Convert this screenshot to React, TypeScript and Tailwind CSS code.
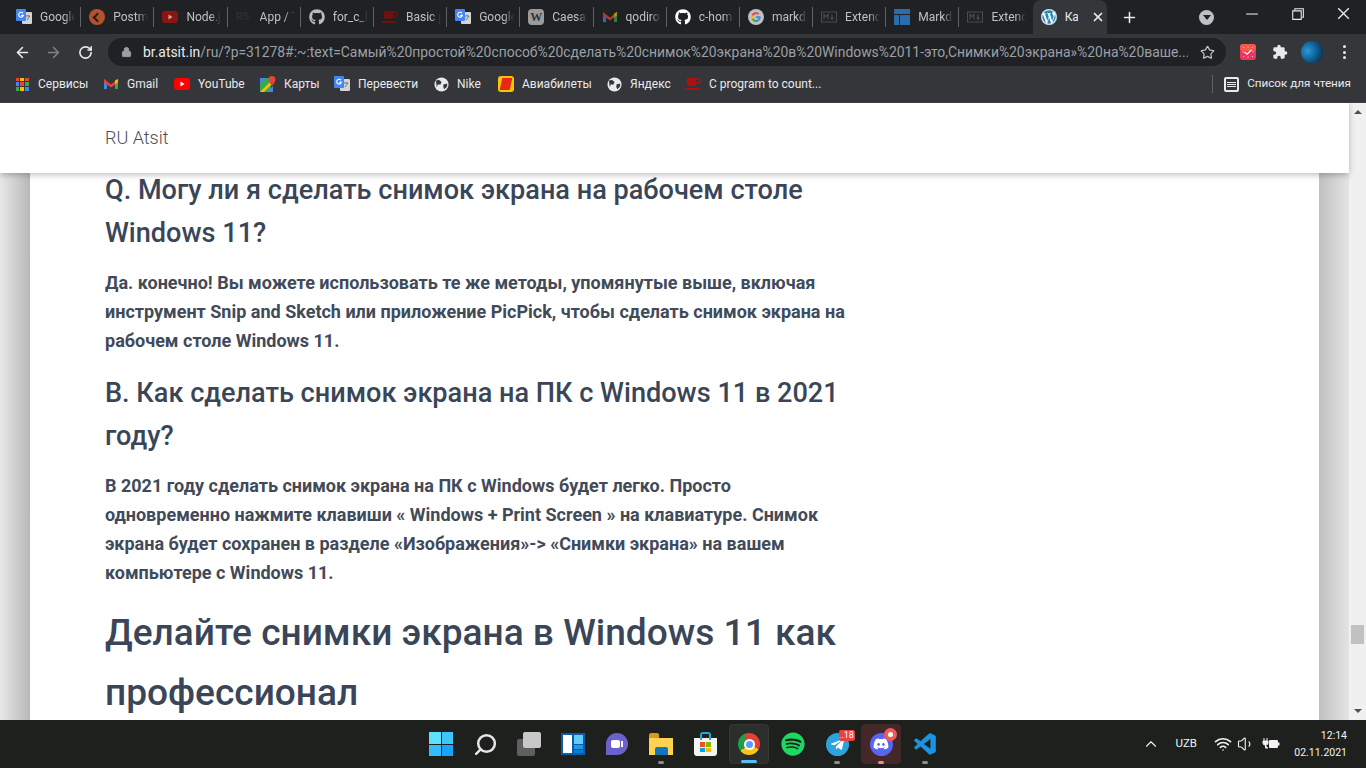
import type { ReactNode } from 'react'
import { FaGithub, FaSpotify, FaDiscord, FaTelegramPlane, FaWordpress } from 'react-icons/fa'
import { BiLogoVisualStudio } from 'react-icons/bi'
import { VscChromeMinimize, VscChromeRestore, VscChromeClose } from 'react-icons/vsc'
import { ArrowLeft, ArrowRight, RotateCw, Lock, Star, Search, Wifi, Volume1, ChevronUp, Plus, X } from 'lucide-react'

const URL_REST =
  '/ru/?p=31278#:~:text=Самый%20простой%20способ%20сделать%20снимок%20экрана%20в%20Windows%2011-это,Снимки%20экрана»%20на%20ваше...'

function Translate() {
  return (
    <svg viewBox="0 0 16 16" className="w-4 h-4">
      <rect x="6" y="3" width="10" height="12" rx="1" fill="#d4d4d4" />
      <path d="M10 7h4M12 6v1M11 11l3-4" stroke="#777" strokeWidth="1" fill="none" />
      <rect x="0" y="0" width="10" height="12" rx="1" fill="#4285f4" />
      <path d="M7 4.200a2.400 2.400 0 1 0 .4 2.200H5.200" stroke="#fff" strokeWidth="1.100" fill="none" />
    </svg>
  )
}

function GmailIcon({ dim = false }: { dim?: boolean }) {
  return (
    <svg viewBox="0 0 16 16" className={dim ? 'w-4 h-4 opacity-70' : 'w-4 h-4'}>
      <path d="M1 3v10h3V7z" fill="#4285f4" />
      <path d="M15 3v10h-3V7z" fill="#34a853" />
      <path d="M1 3l7 5.400L15 3v3.400L8 11.600 1 6.400z" fill="#ea4335" />
      <path d="M12 4.600L15 3v3.400l-3 2.200z" fill="#fbbc04" />
    </svg>
  )
}

function GoogleG() {
  return (
    <svg viewBox="0 0 16 16" className="w-4 h-4">
      <circle cx="8" cy="8" r="8" fill="#dadce0" fillOpacity="0.85" />
      <path d="M12.600 8.200c0-.4 0-.7-.1-1H8v1.900h2.600a2.300 2.300 0 0 1-1 1.500l1.500 1.200c.9-.9 1.500-2.100 1.500-3.600z" fill="#4285f4" />
      <path d="M8 13c1.300 0 2.300-.4 3.100-1.200L9.600 10.600c-.4.300-1 .5-1.600.5-1.300 0-2.300-.8-2.700-2L3.700 10.300C4.500 11.900 6.100 13 8 13z" fill="#34a853" />
      <path d="M5.300 9.100a3 3 0 0 1 0-2L3.700 5.800a5 5 0 0 0 0 4.500z" fill="#fbbc04" />
      <path d="M8 5c.7 0 1.300.2 1.800.7L11.200 4.300A4.900 4.900 0 0 0 3.700 5.800l1.600 1.300C5.700 5.800 6.700 5 8 5z" fill="#ea4335" />
    </svg>
  )
}

function Cup({ color }: { color: string }) {
  return (
    <svg viewBox="0 0 16 16" className="w-4 h-4">
      <path d="M2 2h9v6a2 2 0 0 1-2 2H4a2 2 0 0 1-2-2z" fill={color} />
      <path d="M11 3h2a1.500 1.500 0 0 1 0 4h-2" stroke={color} strokeWidth="1.300" fill="none" />
      <rect x="0" y="12" width="14" height="2" fill={color} />
    </svg>
  )
}

function Markdown() {
  return (
    <svg viewBox="0 0 16 16" className="w-4 h-4">
      <rect x="0.500" y="3" width="15" height="10" fill="none" stroke="#4a4b4f" />
      <path d="M3 10.500V5.500l2 2.200 2-2.200v5M11 5.500v4M9.500 8.500l1.500 2 1.500-2" stroke="#4a4b4f" strokeWidth="1.200" fill="none" />
    </svg>
  )
}

function Globe() {
  return (
    <svg viewBox="0 0 16 16" className="w-[15px] h-[15px]">
      <circle cx="8" cy="8" r="7.500" fill="#e8eaed" />
      <path d="M2 4l3-1 3 2-1 3-3 0-1 3zM10 8l4-1 0 3-3 3-1-2z" fill="#35363a" />
    </svg>
  )
}

function Tube({ bg, play }: { bg: string; play: string }) {
  return (
    <svg viewBox="0 0 16 12" className="w-4 h-3">
      <rect width="16" height="12" rx="3" fill={bg} />
      <path d="M6.500 3.500v5l4-2.500z" fill={play} />
    </svg>
  )
}

const tabs: { title: string; icon: ReactNode }[] = [
  { title: 'Google', icon: <Translate /> },
  {
    title: 'Postman',
    icon: (
      <span className="w-4 h-4 rounded-full bg-[#b3522c] flex items-center justify-center">
        <span className="w-[7px] h-[7px] rotate-45 border-l-2 border-b-2 border-[#2b1c16]" />
      </span>
    ),
  },
  { title: 'Node.js', icon: <Tube bg="#8a1515" play="#d8a0a0" /> },
  { title: 'App / Tab', icon: <span className="w-4 text-[11px] leading-4 font-bold text-[#2c2d31]">RS</span> },
  { title: 'for_c_lang', icon: <FaGithub className="w-4 h-4 text-[#b9babd]" /> },
  { title: 'Basic p', icon: <Cup color="#6e1010" /> },
  { title: 'Google', icon: <Translate /> },
  {
    title: 'Caesar',
    icon: <span className="w-4 h-4 rounded-sm bg-[#9b9b9b] text-center text-[12px] leading-4 font-bold text-[#333] [font-family:'Liberation_Serif',serif]">W</span>,
  },
  { title: 'qodirov', icon: <GmailIcon dim /> },
  { title: 'c-home', icon: <FaGithub className="w-4 h-4 text-white" /> },
  { title: 'markdown', icon: <GoogleG /> },
  { title: 'Extended', icon: <Markdown /> },
  {
    title: 'Markdown',
    icon: (
      <span className="w-4 h-4 flex flex-col gap-px">
        <span className="h-[5px] bg-[#2a6cac]" />
        <span className="flex-1 flex gap-px">
          <span className="w-[5px] bg-[#2a6cac]" />
          <span className="flex-1 bg-[#2a6cac]" />
        </span>
      </span>
    ),
  },
  { title: 'Extended', icon: <Markdown /> },
]

const bookmarks: { label: string; icon: ReactNode; width: string }[] = [
  {
    label: 'Сервисы',
    width: 'w-[89px]',
    icon: (
      <span className="w-[13px] h-[13px] grid grid-cols-3 gap-px">
        {['#ea4335', '#fbbc04', '#ea4335', '#4285f4', '#ea4335', '#34a853', '#34a853', '#fbbc04', '#4285f4'].map((c, i) => (
          <span key={i} style={{ backgroundColor: c }} />
        ))}
      </span>
    ),
  },
  { label: 'Gmail', width: 'w-[71px]', icon: <GmailIcon /> },
  { label: 'YouTube', width: 'w-[86px]', icon: <Tube bg="#ff0000" play="#ffffff" /> },
  {
    label: 'Карты',
    width: 'w-[74px]',
    icon: (
      <svg viewBox="0 0 16 16" className="w-4 h-4">
        <path d="M0 2h11v14H0z" fill="#34a853" />
        <path d="M0 16L11 5v4l-7 7z" fill="#fbbc04" />
        <path d="M7 16l6-6v6z" fill="#4285f4" />
        <path d="M0 2h5L0 8z" fill="#4285f4" />
        <path d="M12 0a3.500 3.500 0 0 1 3.500 3.500C15.500 6 12 10 12 10S8.500 6 8.500 3.500A3.500 3.500 0 0 1 12 0z" fill="#ea4335" />
      </svg>
    ),
  },
  { label: 'Перевести', width: 'w-[99px]', icon: <Translate /> },
  { label: 'Nike', width: 'w-[65px]', icon: <Globe /> },
  {
    label: 'Авиабилеты',
    width: 'w-[108px]',
    icon: (
      <span className="w-4 h-4 rounded-[3px] bg-[#f7c600] flex items-center justify-center">
        <span className="w-[10px] h-3 bg-[#e8261c] -skew-x-12" />
      </span>
    ),
  },
  { label: 'Яндекс', width: 'w-[79px]', icon: <Globe /> },
  { label: 'C program to count...', width: 'w-[140px]', icon: <Cup color="#b01010" /> },
]

const launch: { icon: ReactNode; tile?: string; dot?: string }[] = [
  {
    icon: (
      <span className="w-6 h-6 grid grid-cols-2 gap-px">
        <span className="bg-[#5ee0fb]" />
        <span className="bg-[#3cc6fb]" />
        <span className="bg-[#34bcfb]" />
        <span className="bg-[#18a4fa]" />
      </span>
    ),
  },
  { icon: <Search className="w-[25px] h-[25px] text-[#e6e6e6] -scale-x-100" strokeWidth={2.400} /> },
  {
    icon: (
      <span className="relative w-6 h-6">
        <span className="absolute left-0 bottom-0 w-[18px] h-[17px] rounded-[2px] bg-[#5f5f5f]" />
        <span className="absolute right-0 top-0 w-[18px] h-[16px] rounded-[2px] bg-[#c8c8c8]" />
      </span>
    ),
  },
  {
    icon: (
      <span className="w-6 h-[22px] bg-[#0c5da8] p-[2px] flex gap-[2px]">
        <span className="w-[9px] bg-white" />
        <span className="flex-1 flex flex-col gap-px">
          <span className="flex-1 bg-[#62cdf8]" />
          <span className="h-[4px] bg-[#1e9be8]" />
          <span className="h-[3px] bg-[#0f7cd4]" />
        </span>
      </span>
    ),
  },
  {
    icon: (
      <span className="w-[22px] h-[22px] rounded-full rounded-bl-[3px] bg-[#6b62c9] flex items-center justify-center gap-px">
        <span className="w-[9px] h-2 rounded-[2px] bg-white" />
        <span className="w-[2px] h-[6px] bg-white" />
      </span>
    ),
  },
  {
    icon: (
      <span className="w-6 h-[22px] flex flex-col">
        <span className="h-[5px] w-[10px] rounded-t-[2px] bg-[#d99a1c]" />
        <span className="flex-1 bg-[#ffd34f] flex items-end justify-center">
          <span className="w-[13px] h-2 rounded-t-[2px] bg-[#1076c0]" />
        </span>
      </span>
    ),
    dot: 'bg-[#8b8d8b]',
  },
  {
    icon: (
      <span className="relative w-[23px] h-[24px] flex items-end">
        <span className="absolute left-[6px] top-0 w-[11px] h-2 rounded-t-[3px] border-2 border-b-0 border-[#23a9e1]" />
        <span className="w-full h-[18px] rounded-b-[3px] bg-[#f3f3f3] grid grid-cols-2 gap-px px-[6px] py-[4px]">
          <span className="bg-[#f25022]" />
          <span className="bg-[#7fba00]" />
          <span className="bg-[#00a4ef]" />
          <span className="bg-[#ffb900]" />
        </span>
      </span>
    ),
  },
  {
    icon: (
      <span className="w-[22px] h-[22px] rounded-full bg-[conic-gradient(#e34133_0deg_120deg,#f9c513_120deg_230deg,#1f9e4a_230deg_335deg,#e34133_335deg)] flex items-center justify-center">
        <span className="w-[7px] h-[7px] rounded-full bg-[#5a9df5] border-2 border-white box-content" />
      </span>
    ),
    tile: 'bg-[#2c2e2b] border border-[#363835]',
    dot: 'bg-[#58bdf0] !w-4',
  },
  {
    icon: <FaSpotify className="w-6 h-6 text-[#1ed760]" />,
  },
  {
    icon: (
      <span className="relative w-[23px] h-[23px] rounded-full bg-[#2ba3dc] flex items-center justify-center">
        <FaTelegramPlane className="w-[15px] h-[15px] text-white" />
        <span className="absolute -top-[3px] -right-[6px] w-[16px] h-[11px] rounded-[2px] bg-[#e8433f] text-white text-[9px] leading-[11px] text-center whitespace-nowrap">..18</span>
      </span>
    ),
    dot: 'bg-[#8b8d8b]',
  },
  {
    icon: (
      <span className="relative w-[23px] h-[23px] rounded-full bg-[#5865f2] flex items-center justify-center">
        <FaDiscord className="w-4 h-4 text-white" />
        <span className="absolute -top-[5px] -right-[4px] w-[13px] h-[13px] rounded-full bg-[#ef5b5b] flex items-center justify-center">
          <span className="w-[5px] h-[5px] rounded-full bg-white" />
        </span>
      </span>
    ),
    tile: 'bg-[#432729]',
    dot: 'bg-[#f08a8a]',
  },
  { icon: <BiLogoVisualStudio className="w-[26px] h-[26px] text-[#1a94e0]" />, dot: 'bg-[#8b8d8b]' },
]

function Tab({ title, icon, last }: { title: string; icon: ReactNode; last: boolean }) {
  return (
    <div className="w-[73.200px] h-full flex items-center pl-2 shrink-0">
      <span className="w-4 h-4 shrink-0 flex items-center justify-center">{icon}</span>
      <span className="ml-2 w-[35px] overflow-hidden whitespace-nowrap text-[12px] text-[#bdc1c6] [mask-image:linear-gradient(to_right,black_70%,transparent)]">
        {title}
      </span>
      {!last && <span className="ml-auto w-px h-5 bg-[#5f6368]" />}
    </div>
  )
}

function Bookmark({ label, icon, width }: { label: string; icon: ReactNode; width: string }) {
  return (
    <div className={`${width} shrink-0 flex items-center gap-2`}>
      <span className="w-4 flex justify-center">{icon}</span>
      <span className="text-[12px] text-[#e8eaed] whitespace-nowrap">{label}</span>
    </div>
  )
}

export default function App() {
  return (
    <div className="h-screen w-full flex flex-col overflow-hidden bg-white font-['Roboto',sans-serif]">
      {/* tab strip */}
      <div className="h-[34px] shrink-0 bg-[#202124] flex items-center">
        <div className="h-full flex items-center pl-2">
          {tabs.map((t, i) => (
            <Tab key={i} title={t.title} icon={t.icon} last={i === tabs.length - 1} />
          ))}
          <div className="w-[74px] h-full rounded-t-lg bg-[#35363a] flex items-center pl-2 shrink-0">
            <FaWordpress className="w-4 h-4 text-[#2a87b8] bg-white rounded-full" />
            <span className="ml-2 text-[12px] text-[#e8eaed] w-[13px] overflow-hidden">Как</span>
            <X className="ml-[13px] w-[14px] h-[14px] text-[#e8eaed]" strokeWidth={3} />
          </div>
          <Plus className="ml-[14px] w-[17px] h-[17px] text-[#e8eaed]" strokeWidth={2.200} />
        </div>
        <div className="ml-auto flex items-center h-full">
          <span className="w-[15px] h-[15px] mr-[14px] rounded-full bg-[#bdc1c6] flex items-center justify-center">
            <span className="w-0 h-0 mt-px border-x-[4px] border-t-[5px] border-x-transparent border-t-[#202124]" />
          </span>
          <div className="flex pb-[7px] text-[#e8eaed]">
            <span className="w-[46px] flex justify-center"><VscChromeMinimize className="w-[17px] h-[17px]" /></span>
            <span className="w-[46px] flex justify-center"><VscChromeRestore className="w-[17px] h-[17px]" /></span>
            <span className="w-[46px] flex justify-center"><VscChromeClose className="w-[17px] h-[17px]" /></span>
          </div>
        </div>
      </div>

      {/* toolbar */}
      <div className="h-[36px] shrink-0 bg-[#35363a] flex items-center pl-[14px] pr-[20px]">
        <ArrowLeft className="w-[17px] h-[17px] text-[#e8eaed]" strokeWidth={2.200} />
        <ArrowRight className="ml-[14px] w-[17px] h-[17px] text-[#7f8286]" strokeWidth={2.200} />
        <RotateCw className="ml-[16px] w-[15px] h-[15px] text-[#e8eaed]" strokeWidth={2.600} />
        <div className="ml-[15px] flex-1 min-w-0 h-[28px] rounded-full bg-[#202124] flex items-center pl-[13px] pr-[11px]">
          <Lock className="w-[11px] h-[12px] text-[#9aa0a6] shrink-0" fill="#9aa0a6" />
          <div className="ml-[11px] flex-1 min-w-0 overflow-hidden whitespace-nowrap text-[13.900px] text-[#9aa0a6]">
            <span className="text-[#e8eaed]">br.atsit.in</span>
            {URL_REST}
          </div>
          <Star className="ml-[12px] w-[15px] h-[15px] text-[#bdc1c6] shrink-0" strokeWidth={2} />
        </div>
        <svg viewBox="0 0 16 16" className="ml-[14px] w-[16px] h-[16px] shrink-0">
          <rect width="16" height="16" rx="3" fill="#f0345f" />
          <rect width="16" height="7" rx="3" fill="#f4584a" />
          <path d="M4.500 8l2.500 2.300L11.500 6" stroke="#fff" strokeWidth="1.200" fill="none" />
          <path d="M3 3h1v1H3zM7.500 2.500h1v1h-1zM12 3h1v1h-1zM2.500 7.500h1v1h-1zM12.500 7.500h1v1h-1zM3 12h1v1H3zM7.500 12.500h1v1h-1zM12 12h1v1h-1z" fill="#ffd0d8" />
        </svg>
        <svg viewBox="0 0 24 24" className="ml-[16px] w-[16px] h-[16px] shrink-0">
          <path
            d="M20.500 11H19V7a2 2 0 0 0-2-2h-4V3.500a2.500 2.500 0 0 0-5 0V5H4a2 2 0 0 0-2 2v3.800h1.500a2.700 2.700 0 0 1 0 5.400H2V20a2 2 0 0 0 2 2h3.800v-1.500a2.700 2.700 0 0 1 5.400 0V22H17a2 2 0 0 0 2-2v-4h1.500a2.500 2.500 0 0 0 0-5z"
            fill="#e8eaed"
          />
        </svg>
        <div className="ml-[13px] w-[22px] h-[22px] rounded-full bg-[radial-gradient(circle_at_30%_45%,#2a9ad6,#0c5c90_50%,#061c30)] shrink-0" />
        <div className="ml-[20px] w-[3px] flex flex-col gap-[2.500px] shrink-0">
          <span className="h-[3px] rounded-full bg-[#e8eaed]" />
          <span className="h-[3px] rounded-full bg-[#e8eaed]" />
          <span className="h-[3px] rounded-full bg-[#e8eaed]" />
        </div>
      </div>

      {/* bookmarks */}
      <div className="h-[33px] shrink-0 bg-[#35363a] border-b border-[#3f4044] flex items-center pl-[14px] pr-[15px] pb-[4px]">
        {bookmarks.map((b, i) => (
          <Bookmark key={i} {...b} />
        ))}
        <div className="ml-auto flex items-center">
          <span className="w-px h-[18px] bg-[#5f6368] mr-[11px]" />
          <span className="w-[15px] h-[15px] rounded-[2px] border-2 border-[#e8eaed] flex flex-col justify-center gap-px px-px mr-[8px]">
            <span className="h-px bg-[#e8eaed]" />
            <span className="h-px bg-[#e8eaed]" />
            <span className="h-px bg-[#e8eaed]" />
          </span>
          <span className="text-[11.700px] text-[#e8eaed] whitespace-nowrap">Список для чтения</span>
        </div>
      </div>

      {/* page viewport */}
      <div className="flex-1 min-h-0 flex">
        <div className="flex-1 min-w-0 flex flex-col">
          <header className="relative z-10 h-[70px] shrink-0 bg-white shadow-[0_2px_6px_rgba(0,0,0,0.25)] flex items-center pl-[105px] pb-[2px]">
            <span className="text-[18px] font-light text-[#4b4f58]">RU Atsit</span>
          </header>
          <div className="flex-1 min-h-0 flex overflow-hidden">
            <div className="w-[30px] shrink-0 bg-gradient-to-r from-[#e8e8e8] to-[#b8b8b8]" />
            <main className="flex-1 min-w-0 bg-white pl-[75px] overflow-hidden">
              <div className="w-[745px] -mt-[4px] text-[#3a4658]">
                <h3 className="text-[27.100px] leading-[43px] font-medium">Q. Могу ли я сделать снимок экрана на рабочем столе Windows 11?</h3>
                <p className="mt-[13px] text-[18px] leading-[29px] font-bold text-[#414a59]">
                  Да. конечно! Вы можете использовать те же методы, упомянутые выше, включая инструмент Snip and Sketch или приложение PicPick, чтобы сделать снимок экрана на рабочем столе Windows 11.
                </p>
                <h3 className="mt-[17px] text-[27.100px] leading-[43px] font-medium">В. Как сделать снимок экрана на ПК с Windows 11 в 2021 году?</h3>
                <p className="mt-[13px] text-[18px] leading-[29px] font-bold text-[#414a59]">
                  В 2021 году сделать снимок экрана на ПК с Windows будет легко. Просто одновременно нажмите клавиши « Windows + Print Screen » на клавиатуре. Снимок экрана будет сохранен в разделе «Изображения»-&gt; «Снимки экрана» на вашем компьютере с Windows 11.
                </p>
                <h2 className="mt-[16px] text-[37.100px] leading-[60px] font-medium">Делайте снимки экрана в Windows 11 как профессионал</h2>
              </div>
            </main>
            <div className="w-[30px] shrink-0 bg-gradient-to-r from-[#c0c0c0] to-[#e4e4e4]" />
          </div>
        </div>
        {/* scrollbar */}
        <div className="w-[17px] shrink-0 bg-[#f0f0f0] flex flex-col items-center">
          <span className="mt-[7px] w-0 h-0 border-x-[4px] border-b-[4px] border-x-transparent border-b-[#505050]" />
          <div className="flex-1 w-full px-[2px]">
            <div className="mt-[511px] h-[19px] bg-[#c1c1c1]" />
          </div>
          <span className="mb-[7px] w-0 h-0 border-x-[4px] border-t-[4px] border-x-transparent border-t-[#505050]" />
        </div>
      </div>

      {/* taskbar */}
      <div className="h-[48px] shrink-0 bg-[#1d201d] grid grid-cols-[1fr_auto_1fr] items-center">
        <div />
        <div className="flex gap-[4px]">
          {launch.map((l, i) => (
            <div key={i} className={`relative w-[40px] h-[40px] rounded-[4px] flex items-center justify-center ${l.tile ?? ''}`}>
              {l.icon}
              {l.dot && <span className={`absolute bottom-0 left-1/2 -translate-x-1/2 w-[6px] h-[3px] rounded-full ${l.dot}`} />}
            </div>
          ))}
        </div>
        <div className="flex items-center justify-end text-[#f2f2f2] pr-[19px]">
          <ChevronUp className="w-[18px] h-[18px]" strokeWidth={1.500} />
          <span className="ml-[15px] text-[11.500px]">UZB</span>
          <Wifi className="ml-[17px] w-[18px] h-[18px]" strokeWidth={2.200} />
          <Volume1 className="ml-[5px] w-[18px] h-[18px]" strokeWidth={1.500} />
          <svg viewBox="0 0 18 14" className="ml-[7px] w-[18px] h-[14px]">
            <path d="M2 1v3M5 1v3M1 4h5v2a2 2 0 0 1-2 2H3a2 2 0 0 1-2-2zM3.500 8v3H6" stroke="#f2f2f2" strokeWidth="1" fill="#f2f2f2" />
            <rect x="7" y="3" width="9" height="8" rx="1" fill="#f2f2f2" />
            <rect x="16" y="5.500" width="1.500" height="3" fill="#f2f2f2" />
          </svg>
          <div className="ml-[15px] w-[52px] flex flex-col items-end text-[10.500px] leading-[17px] whitespace-nowrap">
            <span>12:14</span>
            <span>02.11.2021</span>
          </div>
        </div>
      </div>
    </div>
  )
}
